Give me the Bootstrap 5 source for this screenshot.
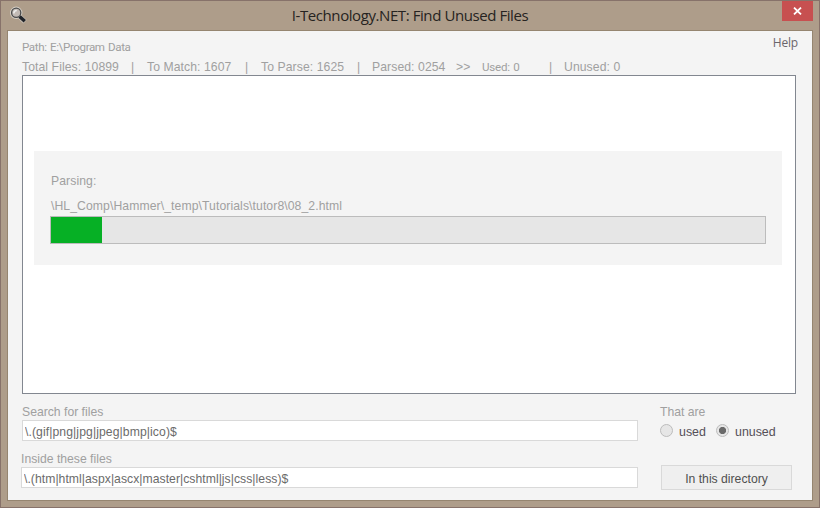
<!DOCTYPE html>
<html lang="en">
<head>
<meta charset="utf-8">
<meta name="viewport" content="width=device-width, initial-scale=1">
<title>I-Technology.NET: Find Unused Files</title>
<link href="https://cdn.jsdelivr.net/npm/bootstrap@5.3.0/dist/css/bootstrap.min.css" rel="stylesheet">
<style>
body{width:820px;height:508px;font:12.2px/16px "Liberation Sans",Arial,sans-serif;color:#a0a0a0}
.app-window{width:820px;height:508px;background:#ae9d8a;border:1px solid #87726a;padding:0 6px 6px}
.title-bar{height:29px}
.app-icon{width:18px;height:18px;margin:5px 0 0 2px}
.app-title{font:15px/20px "Open Sans","Noto Sans",sans-serif;letter-spacing:-.42px;color:#262321;margin:4px 0 0}
.close-btn{width:31px;height:20px;background:#c75050;border:0;padding:0}
.client{background:#f4f4f4;border:1px solid #958570;height:471px;padding:0 16px 0 14px}
.top-row{height:28px}
.path-text{font:11.6px/16px Roboto,sans-serif;letter-spacing:-.4px;word-spacing:1px;margin-top:8px}
.help-link{font:12px/16px "Open Sans",sans-serif;letter-spacing:-.2px;color:#6b656b;margin:4px -2px 0 0}
.stats{height:16px;white-space:pre;letter-spacing:.08px}
.total{width:109px}.divider{width:16px}.to-match{width:98px}.to-parse{width:96px}.parsed{width:84px}.arrows{width:26px}
.divider-parse{width:15px}
.used-count{width:67px;font:11.6px/16px Roboto,sans-serif;letter-spacing:-.25px;word-spacing:1px}.last-divider{width:15px}
.result-box{height:319px;background:#fff;border:1px solid #828790;padding:75px 13px 0 11px}
.parse-panel{height:114px;background:#f4f4f4;padding:22px 16px 0}
.parse-file{margin-top:9px;padding-left:1px;letter-spacing:.09px}
.progress.parse-progress{height:28px;background:#e6e6e6;border:1px solid #bcbcbc;border-radius:0;margin-top:2px}
.parse-progress .progress-bar{background:#06b025}
.parse-title{padding-left:1px;letter-spacing:.08px}
.fields{width:617px;margin-left:-1px}
.field-label{height:16px;display:block}
.form-control.pattern{height:21px;border:1px solid #d9d9d9;border-radius:0;padding:3px 2px 0;font:12.2px/16px "Liberation Sans",Arial,sans-serif;letter-spacing:.09px;color:#6b6b6b;background:#fff}
#inside{letter-spacing:.04px}
.search-group{padding:10px 0 0 1px}
.inside-group{padding-top:10px}
.side{width:132px;margin-right:4px;padding-top:10px}
.radio-row{height:21px;color:#545058;font-size:12.4px}
.form-check-input.radio-dot{width:13px;height:13px;margin:4px 6px 0 0;border:1px solid #bcbcbc;background:#e6e6e6}
.form-check-input.radio-dot:checked{background:radial-gradient(circle,#6a6a6a 0 3.2px,#e6e6e6 4px);border-color:#bcbcbc}
.radio-row label{margin-top:4px}
.used-label{width:37px}
.btn.dir-btn{height:25px;width:131px;border:1px solid #d9d9d9;border-radius:0;background:#efefef;padding:3px 0 0;font-size:12.2px;line-height:16px;color:#505050;margin:24px 0 0 1px}
</style>
</head>
<body>
<main class="app-window overflow-hidden">
  <header class="title-bar row g-0 flex-nowrap">
    <div class="col"><svg class="app-icon d-block" viewBox="0 0 18 18"><path d="M11 11l5 4.7" stroke="#c8c0b6" stroke-width="5"/><circle cx="7.2" cy="6.8" r="5" fill="#cfc5bf" stroke="#d5cec5" stroke-width="2.4"/><path d="M10.6 10.4l5.2 4.9" stroke="#202329" stroke-width="3.4"/><circle cx="7.2" cy="6.8" r="4.6" fill="#c2bab5" stroke="#4b4c4d" stroke-width="1.3"/><path d="M4.8 7.5c0-2 1-3 3-3" stroke="#eee" stroke-width="1.5" fill="none"/></svg></div>
    <h1 class="app-title col-auto">I-Technology.NET: Find Unused Files</h1>
    <div class="col text-end"><button class="close-btn d-inline-flex align-items-center justify-content-center" aria-label="Close"><svg width="9" height="8" viewBox="0 0 9 8"><path d="M1 .6l7 6.8M8 .6L1 7.4" stroke="#fff" stroke-width="1.8"/></svg></button></div>
  </header>
  <section class="client">
    <div class="top-row d-flex justify-content-between"><span class="path-text">Path: E:\Program Data</span><a class="help-link text-decoration-none">Help</a></div>
    <div class="stats d-flex"><span class="total">Total Files: 10899</span><span class="divider">|</span><span class="to-match">To Match: 1607</span><span class="divider">|</span><span class="to-parse">To Parse: 1625</span><span class="divider-parse">|</span><span class="parsed">Parsed: 0254</span><span class="arrows">&gt;&gt;</span><span class="used-count">Used: 0</span><span class="last-divider">|</span><span>Unused: 0</span></div>
    <div class="result-box">
      <div class="parse-panel">
        <div class="parse-title">Parsing:</div>
        <div class="parse-file">\HL_Comp\Hammer\_temp\Tutorials\tutor8\08_2.html</div>
        <div class="progress parse-progress" role="progressbar" aria-valuenow="7" aria-valuemin="0" aria-valuemax="100"><div class="progress-bar" style="width:7.14%"></div></div>
      </div>
    </div>
    <div class="d-flex justify-content-between">
      <div class="fields">
        <div class="search-group"><label class="field-label" for="find">Search for files</label><input id="find" class="form-control pattern" value="\.(gif|png|jpg|jpeg|bmp|ico)$"></div>
        <div class="inside-group"><label class="field-label" for="inside">Inside these files</label><input id="inside" class="form-control pattern" value="\.(htm|html|aspx|ascx|master|cshtml|js|css|less)$"></div>
      </div>
      <div class="side">
        <div>That are</div>
        <div class="radio-row d-flex"><input type="radio" name="usage" id="used" class="form-check-input radio-dot"><label for="used" class="used-label">used</label><input type="radio" name="usage" id="unused" class="form-check-input radio-dot" checked><label for="unused">unused</label></div>
        <button class="btn dir-btn">In this directory</button>
      </div>
    </div>
  </section>
</main>
<script src="https://cdn.jsdelivr.net/npm/bootstrap@5.3.0/dist/js/bootstrap.bundle.min.js"></script>
</body>
</html>
